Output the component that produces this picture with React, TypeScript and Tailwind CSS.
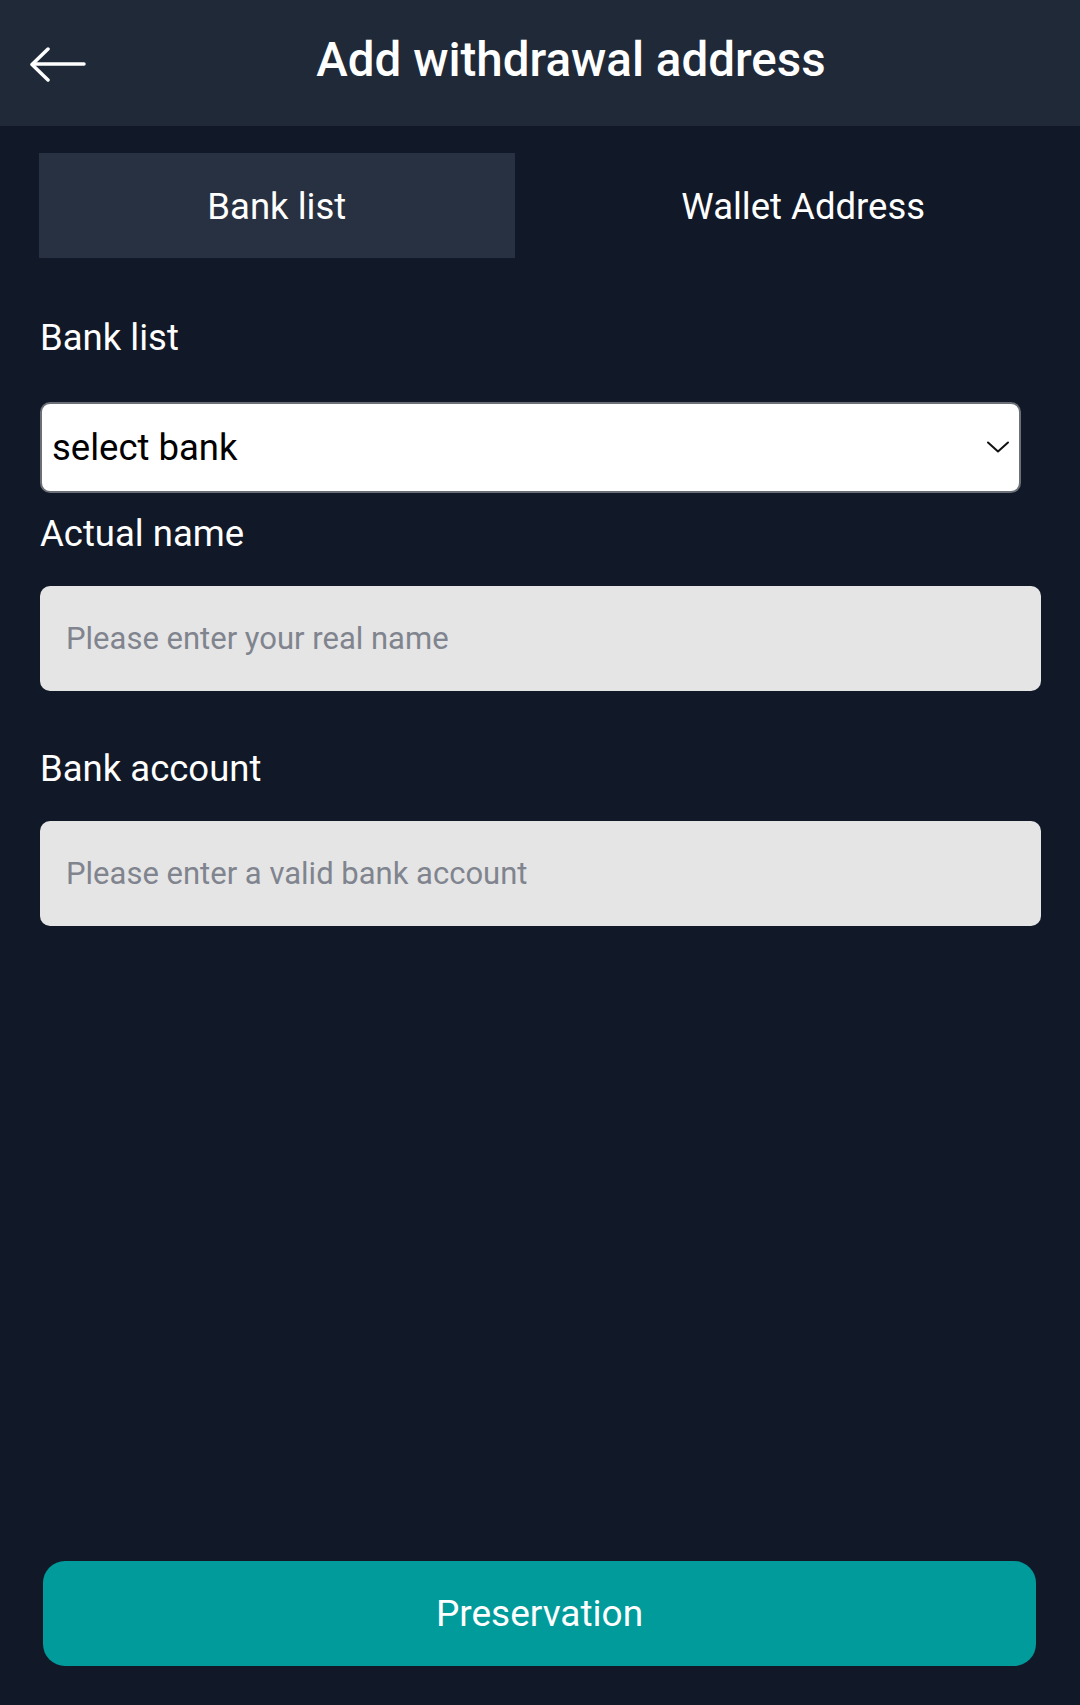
import React from 'react';

function BackArrow() {
  return (
    <svg width="56" height="36" viewBox="0 0 56 36" fill="none" stroke="white" strokeWidth="3.5" strokeLinecap="round" strokeLinejoin="round">
      <path d="M54 17H3" />
      <path d="M18 2L2 17.5L18 33" />
    </svg>
  );
}

function Chevron() {
  return (
    <svg width="24" height="12" viewBox="0 0 24 12" fill="none" stroke="#111" strokeWidth="2" strokeLinecap="round" strokeLinejoin="round">
      <path d="M2 1.5L12 10.5L22 1.5" />
    </svg>
  );
}

export default function App() {
  return (
    <div className="min-h-screen bg-[#111827] flex flex-col font-['Roboto','Liberation_Sans',sans-serif] text-white">
      {/* Header */}
      <header className="h-[126px] bg-[#1f2937] flex items-start shrink-0">
        <button className="ml-[30px] mt-[47px] w-[56px] shrink-0">
          <BackArrow />
        </button>
        <h1 className="flex-1 mr-[24px] mt-[37px] text-center text-[47.5px] leading-none font-medium">
          Add withdrawal address
        </h1>
      </header>

      <main className="flex-1 flex flex-col">
        {/* Tabs */}
        <div className="mt-[27px] mx-[39px] grid grid-cols-2 gap-[51px]">
          <button className="h-[105px] bg-[#283141] text-[36.5px] pt-[3px] flex items-center justify-center">
            Bank list
          </button>
          <button className="h-[105px] text-[36.5px] pt-[3px] flex items-center justify-center">
            Wallet Address
          </button>
        </div>

        {/* Form */}
        <section className="mx-[40px] mr-[39px]">
          <label className="block mt-[62px] text-[36.5px] leading-none">Bank list</label>
          <div className="mt-[45px] w-[981px] h-[91px] bg-white rounded-[10px] border-2 border-[#6b6f76] flex items-center justify-between pl-[10px] pr-[9px]">
            <span className="text-[36.5px] text-black pt-[2px]">select bank</span>
            <Chevron />
          </div>

          <label className="block mt-[23px] text-[36.5px] leading-none">Actual name</label>
          <input
            className="mt-[34px] w-full h-[105px] rounded-[10px] bg-[#e5e5e5] px-[26px] text-[31px] text-black placeholder:text-[#80848e] outline-none"
            placeholder="Please enter your real name"
          />

          <label className="block mt-[60px] text-[36.5px] leading-none">Bank account</label>
          <input
            className="mt-[33px] w-full h-[105px] rounded-[10px] bg-[#e5e5e5] px-[26px] text-[31px] text-black placeholder:text-[#80848e] outline-none"
            placeholder="Please enter a valid bank account"
          />
        </section>

        <div className="mt-auto mb-[39px] mx-[43px] mr-[44px]">
          <button className="w-full h-[105px] rounded-[22px] bg-[#019b9b] text-[37px] text-white">
            Preservation
          </button>
        </div>
      </main>
    </div>
  );
}
